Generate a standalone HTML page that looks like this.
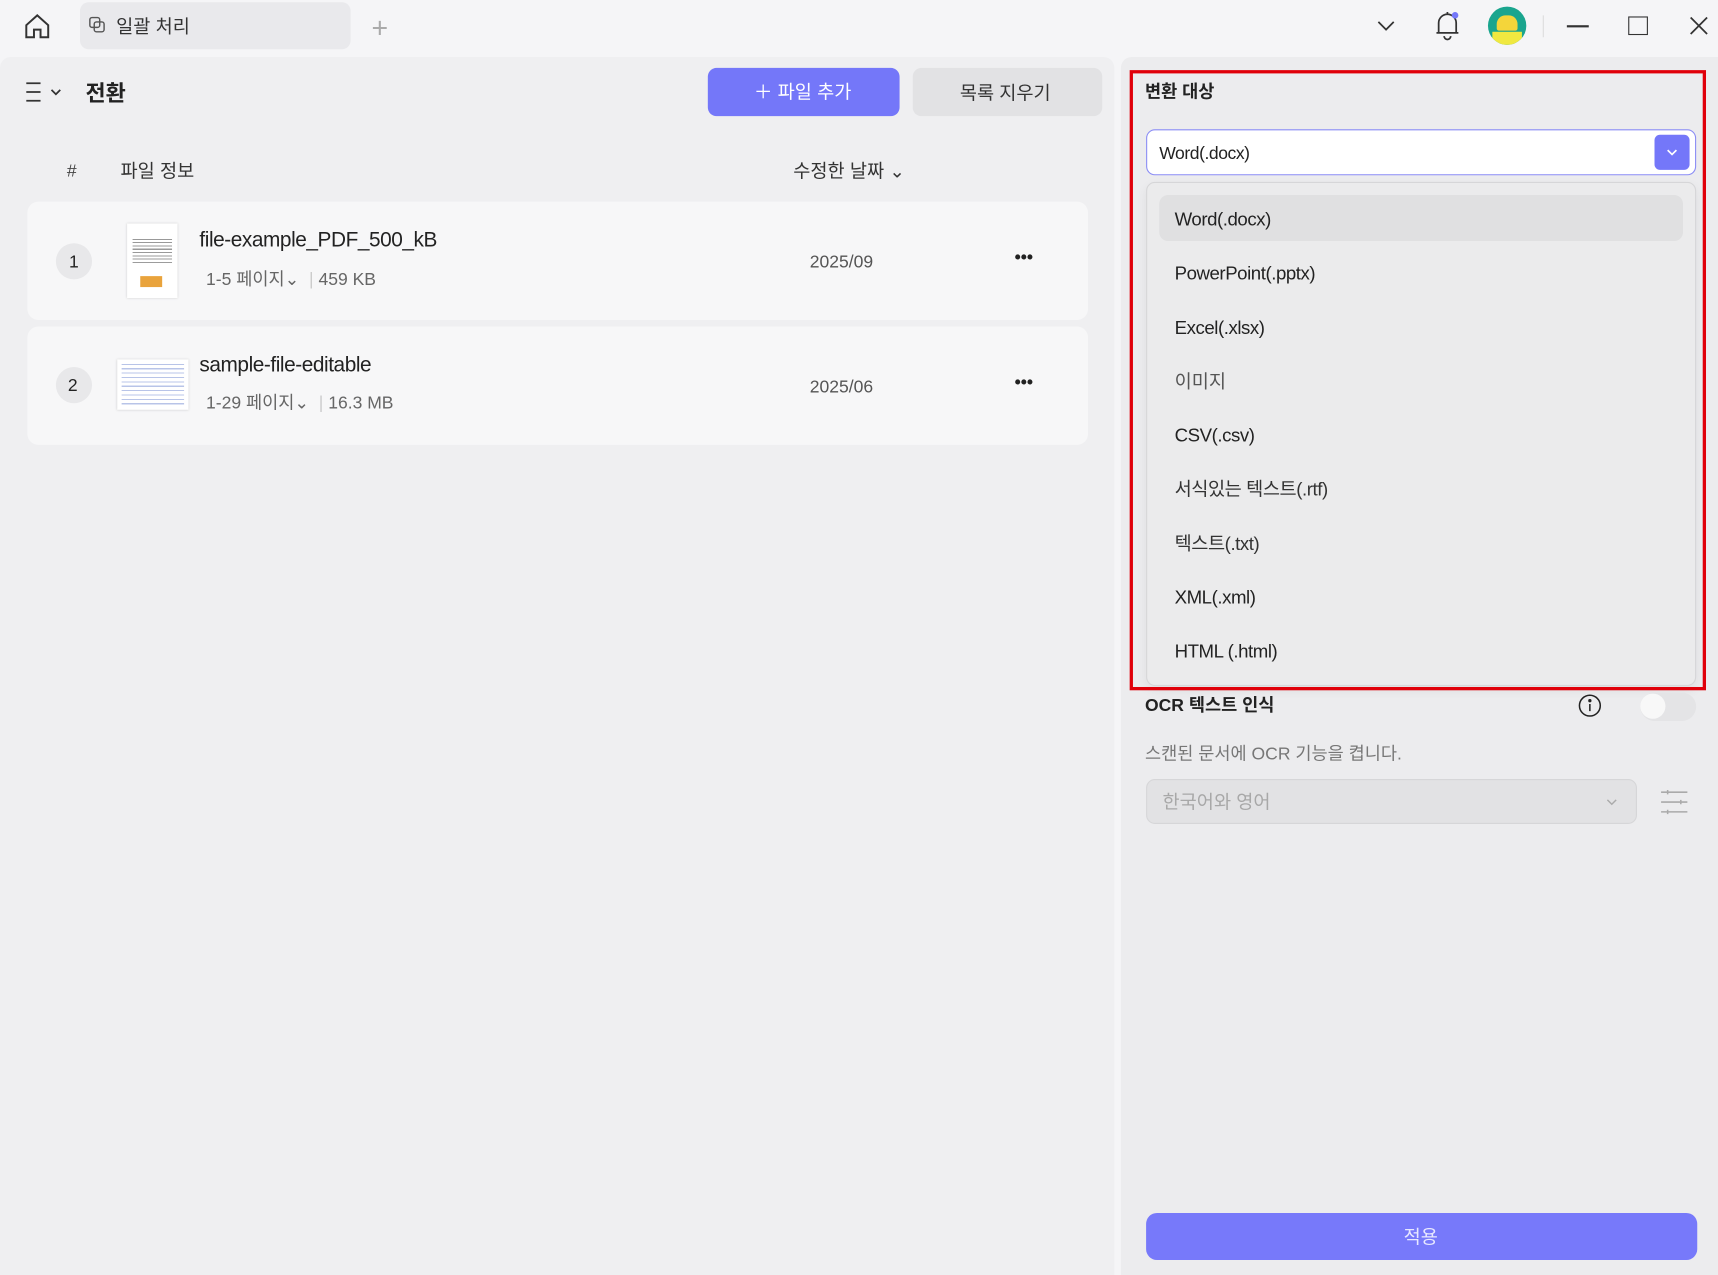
<!DOCTYPE html>
<html><head><meta charset="utf-8"><style>
*{box-sizing:border-box;margin:0;padding:0}
html,body{width:1718px;height:1275px;overflow:hidden;background:#f5f5f7}
#s{position:absolute;left:0;top:0;width:1568px;height:1164px;transform:scale(1.0957);transform-origin:0 0;font-family:"Liberation Sans","Noto Sans CJK KR",sans-serif;color:#222}
.a{position:absolute}
.t{position:absolute;white-space:nowrap;line-height:1;margin-top:2px}
.n{letter-spacing:-0.4px}
</style></head><body><div id="s">
<svg class="a" style="left:20px;top:10px" width="28" height="28" viewBox="0 0 28 28" fill="none" stroke="#333" stroke-width="1.8"><path d="M4 13 L14 4 L24 13 V24 H17 V17 H11 V24 H4 Z"/></svg>
<div class="a" style="left:73px;top:2px;width:247px;height:43px;background:#e9e9ec;border-radius:8px"></div>
<svg class="a" style="left:81px;top:15px" width="16" height="16" viewBox="0 0 16 16" fill="none" stroke="#555" stroke-width="1.3"><rect x="1" y="1" width="9" height="9" rx="2"/><rect x="5" y="5" width="9" height="9" rx="2"/></svg>
<div class="t" style="left:106px;top:14px;font-size:17px;color:#333">일괄 처리</div>
<div class="t" style="left:339px;top:10px;font-size:26px;color:#aaa;font-weight:300">+</div>
<svg class="a" style="left:1256px;top:16px" width="18" height="14" viewBox="0 0 18 14" fill="none" stroke="#333" stroke-width="1.6"><path d="M2 4 L9 11 L16 4"/></svg>
<svg class="a" style="left:1308px;top:8px" width="26" height="30" viewBox="0 0 26 30" fill="none" stroke="#333" stroke-width="1.6"><path d="M5 22 V13 A8 8 0 0 1 21 13 V22 H5 Z M3 22 H23 M10 25 A3 3 0 0 0 16 25 M13 3 V5"/><circle cx="20" cy="6" r="3" fill="#7477f9" stroke="none"/></svg>
<div class="a" style="left:1358px;top:6px;width:35px;height:35px;border-radius:50%;background:#1aa58e;overflow:hidden"><div class="a" style="left:8px;top:8px;width:19px;height:14px;background:#f4d53a;border-radius:8px 8px 2px 2px"></div><div class="a" style="left:4px;top:23px;width:27px;height:12px;background:#f0e840"></div></div>
<div class="a" style="left:1408px;top:14px;width:1px;height:20px;background:#ddd"></div>
<div class="a" style="left:1430px;top:23px;width:20px;height:1.6px;background:#333"></div>
<div class="a" style="left:1486px;top:15px;width:18px;height:17px;border:1.6px solid #333"></div>
<svg class="a" style="left:1541px;top:14px" width="19" height="19" viewBox="0 0 19 19" stroke="#333" stroke-width="1.6"><path d="M2 2 L17 17 M17 2 L2 17"/></svg>

<div class="a" style="left:0;top:52px;width:1017px;height:1112px;background:#efeff1;border-radius:10px 10px 0 0"></div>
<svg class="a" style="left:22px;top:74px" width="36" height="20" viewBox="0 0 36 20" fill="none" stroke="#333" stroke-width="1.6"><path d="M2 2 H15 M2 10 H15 M2 18 H15 M25 8 L29 12 L33 8"/></svg>
<div class="t" style="left:78px;top:74px;font-size:20px;font-weight:bold">전환</div>
<div class="a" style="left:646px;top:62px;width:175px;height:44px;background:#7477f9;border-radius:8px"></div>
<div class="t" style="left:688px;top:74px;font-size:17px;color:#fff">＋ 파일 추가</div>
<div class="a" style="left:833px;top:62px;width:173px;height:44px;background:#e2e2e4;border-radius:8px"></div>
<div class="t" style="left:876px;top:75px;font-size:17px;color:#333">목록 지우기</div>
<div class="t" style="left:61px;top:147px;font-size:16px;color:#444">#</div>
<div class="t" style="left:110px;top:146px;font-size:17px;color:#333">파일 정보</div>
<div class="t" style="left:724px;top:146px;font-size:17px;color:#333">수정한 날짜 ⌄</div>

<div class="a" style="left:25px;top:184px;width:968px;height:108px;background:#f7f7f8;border-radius:10px"></div>
<div class="a" style="left:51px;top:222px;width:33px;height:33px;border-radius:50%;background:#e8e8ea"></div>
<div class="t" style="left:63px;top:230px;font-size:16px">1</div>
<div class="a" style="left:116px;top:204px;width:46px;height:68px;background:#fff;box-shadow:0 0 2px #ccc"><div class="a" style="left:5px;top:14px;width:36px;height:22px;background:repeating-linear-gradient(#999 0 1px,transparent 1px 3px)"></div><div class="a" style="left:12px;top:48px;width:20px;height:10px;background:#e9a33c"></div></div>
<div class="t n" style="left:182px;top:208px;font-size:19px;color:#222">file-example_PDF_500_kB</div>
<div class="t" style="left:188px;top:246px;font-size:16px;color:#666">1-5 페이지⌄ &nbsp;<span style="color:#ccc">|</span> 459 KB</div>
<div class="t" style="left:739px;top:230px;font-size:16px;color:#555">2025/09</div>
<div class="t" style="left:926px;top:226px;font-size:16px;font-weight:bold;color:#222;letter-spacing:0px">•••</div>

<div class="a" style="left:25px;top:298px;width:968px;height:108px;background:#f7f7f8;border-radius:10px"></div>
<div class="a" style="left:51px;top:335px;width:33px;height:33px;border-radius:50%;background:#e8e8ea"></div>
<div class="t" style="left:62px;top:343px;font-size:16px">2</div>
<div class="a" style="left:107px;top:328px;width:65px;height:46px;background:#fff;box-shadow:0 0 2px #ccc"><div class="a" style="left:4px;top:4px;width:57px;height:38px;background:repeating-linear-gradient(#b8c4e8 0 1px,transparent 1px 4px)"></div></div>
<div class="t n" style="left:182px;top:322px;font-size:19px;color:#222">sample-file-editable</div>
<div class="t" style="left:188px;top:359px;font-size:16px;color:#666">1-29 페이지⌄ &nbsp;<span style="color:#ccc">|</span> 16.3 MB</div>
<div class="t" style="left:739px;top:344px;font-size:16px;color:#555">2025/06</div>
<div class="t" style="left:926px;top:340px;font-size:16px;font-weight:bold;color:#222;letter-spacing:0px">•••</div>

<div class="a" style="left:1023px;top:52px;width:545px;height:1112px;background:#ececee;border-radius:10px 0 0 0"></div>
<div class="t" style="left:1045px;top:75px;font-size:16px;font-weight:bold">변환 대상</div>
<div class="a" style="left:1046px;top:118px;width:502px;height:42px;background:#fff;border:1.5px solid #8a8cf5;border-radius:8px"></div>
<div class="t n" style="left:1058px;top:131px;font-size:16px;color:#222">Word(.docx)</div>
<div class="a" style="left:1510px;top:123px;width:32px;height:32px;background:#7477f9;border-radius:5px"></div>
<svg class="a" style="left:1520px;top:134px" width="12" height="10" viewBox="0 0 12 10" fill="none" stroke="#fff" stroke-width="1.5"><path d="M2 3 L6 7 L10 3"/></svg>
<div class="a" style="left:1046px;top:166px;width:502px;height:460px;background:#ebebec;border:1px solid #d6d6d8;border-radius:8px;box-shadow:0 4px 10px rgba(0,0,0,.06)"></div>
<div class="a" style="left:1058px;top:178px;width:478px;height:42px;background:#e0e0e1;border-radius:8px"></div>
<div class="t n" style="left:1072px;top:190px;font-size:17px">Word(.docx)</div>
<div class="t n" style="left:1072px;top:239px;font-size:17px">PowerPoint(.pptx)</div>
<div class="t n" style="left:1072px;top:289px;font-size:17px">Excel(.xlsx)</div>
<div class="t" style="left:1072px;top:338px;font-size:17px;color:#555">이미지</div>
<div class="t n" style="left:1072px;top:387px;font-size:17px">CSV(.csv)</div>
<div class="t n" style="left:1072px;top:436px;font-size:17px;color:#333">서식있는 텍스트(.rtf)</div>
<div class="t n" style="left:1072px;top:486px;font-size:17px;color:#333">텍스트(.txt)</div>
<div class="t n" style="left:1072px;top:535px;font-size:17px">XML(.xml)</div>
<div class="t n" style="left:1072px;top:584px;font-size:17px">HTML (.html)</div>
<div class="a" style="left:1031px;top:64px;width:526px;height:566px;border:3px solid #e0000a"></div>

<div class="t" style="left:1045px;top:635px;font-size:16px;font-weight:bold">OCR 텍스트 인식</div>
<svg class="a" style="left:1440px;top:633px" width="22" height="22" viewBox="0 0 22 22" fill="none" stroke="#222" stroke-width="1.4"><circle cx="11" cy="11" r="9.5"/><path d="M11 9.5 V16"/><circle cx="11" cy="6.5" r=".8" fill="#222"/></svg>
<div class="a" style="left:1497px;top:632px;width:51px;height:26px;background:#e4e4e6;border-radius:13px"></div>
<div class="a" style="left:1497px;top:633px;width:23px;height:23px;background:#f8f8f8;border-radius:50%"></div>
<div class="t" style="left:1045px;top:679px;font-size:16px;color:#777">스캔된 문서에 OCR 기능을 켭니다.</div>
<div class="a" style="left:1046px;top:711px;width:448px;height:41px;background:#e2e2e4;border:1px solid #d6d6d8;border-radius:8px"></div>
<div class="t" style="left:1061px;top:722px;font-size:17px;color:#a8a8a8">한국어와 영어</div>
<svg class="a" style="left:1465px;top:728px" width="12" height="8" viewBox="0 0 12 8" fill="none" stroke="#aaa" stroke-width="1.3"><path d="M2 2 L6 6 L10 2"/></svg>
<svg class="a" style="left:1515px;top:719px" width="26" height="26" viewBox="0 0 26 26" fill="none" stroke="#aaa" stroke-width="1.4"><path d="M1 4 H25 M1 13 H25 M1 22 H25"/><path d="M7 2 V6 M19 11 V15 M7 20 V24"/></svg>
<div class="a" style="left:1046px;top:1107px;width:503px;height:43px;background:#7779fa;border-radius:10px"></div>
<div class="t" style="left:1281px;top:1119px;font-size:17px;color:#e8e8ff">적용</div>
</div></body></html>
